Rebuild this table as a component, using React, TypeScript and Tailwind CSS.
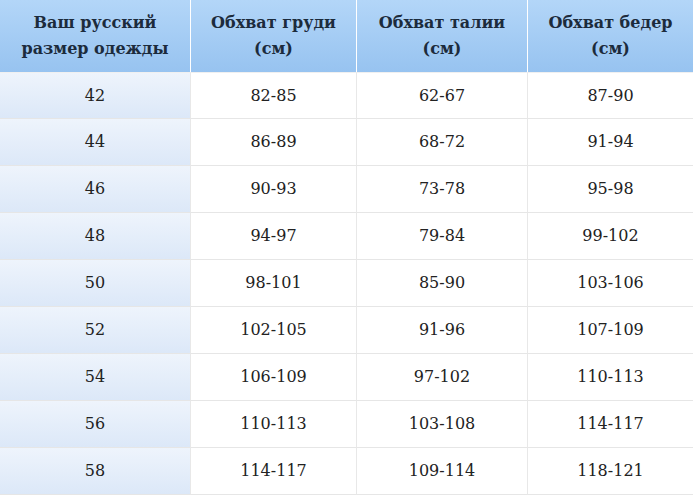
import React from "react";

const rows = [
  ["42", "82-85", "62-67", "87-90"],
  ["44", "86-89", "68-72", "91-94"],
  ["46", "90-93", "73-78", "95-98"],
  ["48", "94-97", "79-84", "99-102"],
  ["50", "98-101", "85-90", "103-106"],
  ["52", "102-105", "91-96", "107-109"],
  ["54", "106-109", "97-102", "110-113"],
  ["56", "110-113", "103-108", "114-117"],
  ["58", "114-117", "109-114", "118-121"],
];

const headers = [
  ["Ваш русский", "размер одежды"],
  ["Обхват груди", "(см)"],
  ["Обхват талии", "(см)"],
  ["Обхват бедер", "(см)"],
];

export default function App() {
  return (
    <div
      className="w-[693px] h-[496px] bg-white overflow-hidden"
      style={{ fontFamily: "Georgia, 'DejaVu Serif', serif" }}
    >
      <div className="grid grid-cols-[190px_166px_171px_166px]">
        {headers.map((h, i) => (
          <div
            key={i}
            className={`h-[72px] flex flex-col items-center justify-center bg-gradient-to-b from-[#b3d6f8] to-[#97c3f0] text-[#1c2b3c] font-bold text-[16px] leading-[26px] ${i > 0 ? "border-l border-white" : ""}`}
          >
            <span>{h[0]}</span>
            <span>{h[1]}</span>
          </div>
        ))}
        {rows.map((r, ri) =>
          r.map((c, ci) => (
            <div
              key={`${ri}-${ci}`}
              className={`h-[47px] flex items-center justify-center text-[16px] text-[#222] border-b border-[#e6e6e6] ${ri === 0 ? "border-t border-t-[#f0f0f0]" : ""} ${ci > 0 ? "border-l border-l-[#e8e8e8]" : ""} ${ci === 0 ? "bg-gradient-to-b from-[#eef4fc] to-[#dce8f8]" : "bg-white"}`}
            >
              {c}
            </div>
          ))
        )}
      </div>
    </div>
  );
}
